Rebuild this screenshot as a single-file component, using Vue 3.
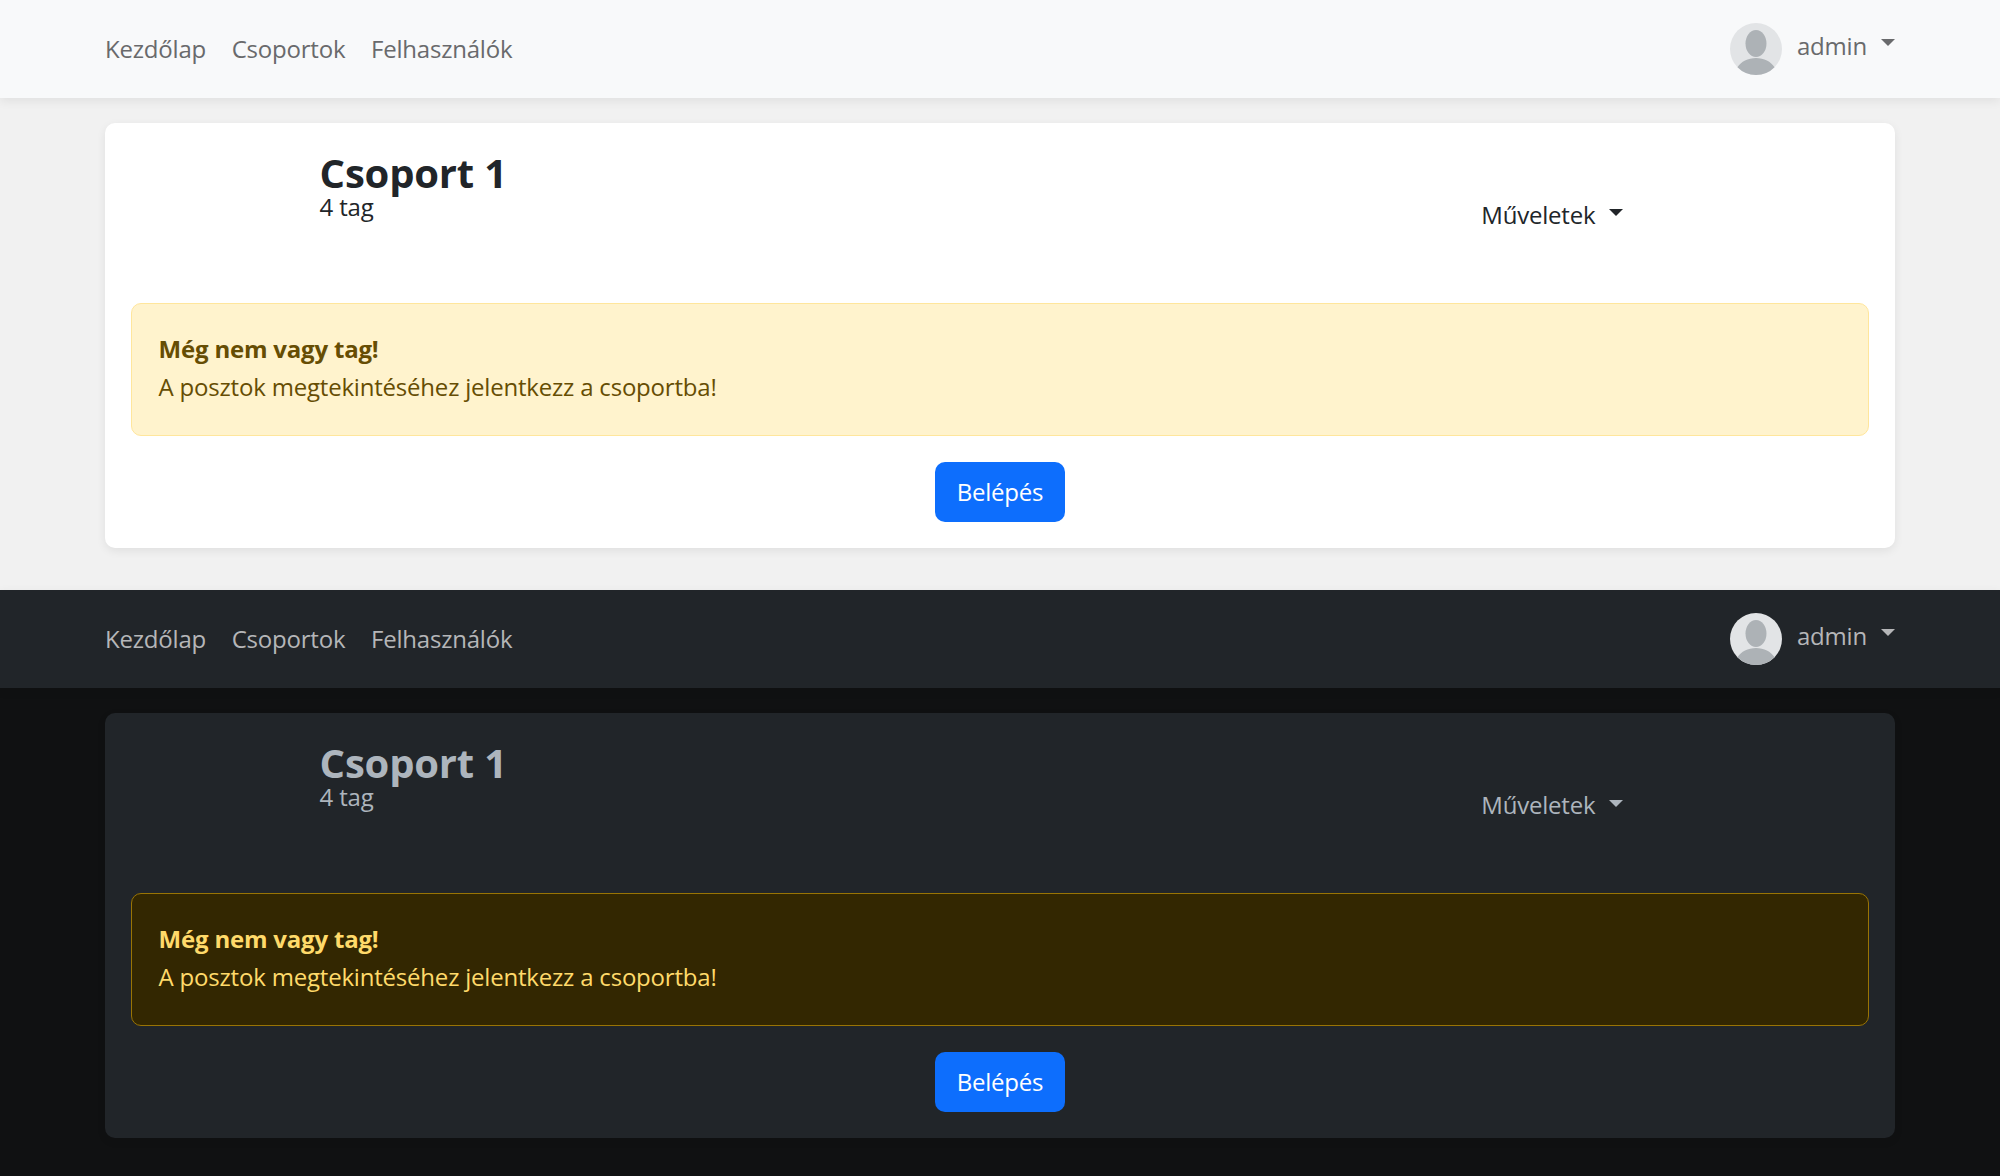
<script setup>
const themes = ['light', 'dark'];
const links = ['Kezdőlap', 'Csoportok', 'Felhasználók'];
</script>

<template>
  <div class="page">
    <section v-for="theme in themes" :key="theme" :class="['view', theme]">
      <nav class="navbar">
        <div class="nav-links">
          <a v-for="link in links" :key="link" class="nav-link">{{ link }}</a>
        </div>
        <div class="user">
          <svg class="avatar" viewBox="0 0 52 52">
            <circle cx="26" cy="26" r="26" fill="#e2e4e6" />
            <ellipse cx="26" cy="20.5" rx="10.5" ry="13.5" fill="#adb2b6" />
            <path d="M7.5 44.3C11 38.5 18 35 26 35s15 3.5 18.5 9.3A26 26 0 0 1 26 52 26 26 0 0 1 7.5 44.3z" fill="#adb2b6" />
          </svg>
          <span class="user-name">admin</span>
          <span class="caret"></span>
        </div>
      </nav>

      <main class="card">
        <header class="group-head">
          <div class="group-title">
            <h2>Csoport 1</h2>
            <p>4 tag</p>
          </div>
          <div class="actions">
            <span>Műveletek</span>
            <span class="caret"></span>
          </div>
        </header>

        <div class="alert">
          <strong>Még nem vagy tag!</strong>
          <p>A posztok megtekintéséhez jelentkezz a csoportba!</p>
        </div>

        <div class="join">
          <button class="btn">Belépés</button>
        </div>
      </main>
    </section>
  </div>
</template>

<style>
html, body {
  margin: 0;
  overflow: hidden;
}
</style>

<style scoped>
.page {
  height: 100vh;
  display: flex;
  flex-direction: column;
  font-family: "Open Sans", "Noto Sans", sans-serif;
  font-size: 24px;
  letter-spacing: -0.2px;
  line-height: 38.4px;
}

.view {
  padding-bottom: 42px;
}
.view.dark {
  flex: 1;
  padding-bottom: 0;
}

.light {
  --bg: #f1f1f1;
  --nav: #f8f9fa;
  --link: #696a6c;
  --card: #fff;
  --title: #212529;
  --text: #212529;
  --alert-bg: #fff3cd;
  --alert-border: #ffe69c;
  --alert-text: #664d03;
  --shadow: rgba(0, 0, 0, 0.075);
  background: var(--bg);
}
.dark {
  --bg: #101112;
  --nav: #212529;
  --link: #b5b6b8;
  --card: #212529;
  --title: #adb5bd;
  --text: #adb5bd;
  --alert-bg: #332701;
  --alert-border: #997404;
  --alert-text: #ffda6a;
  --shadow: rgba(0, 0, 0, 0.075);
  background: var(--bg);
}

.navbar {
  height: 97.6px;
  box-sizing: border-box;
  padding: 0 105px;
  display: flex;
  align-items: center;
  justify-content: space-between;
  background: var(--nav);
  box-shadow: 0 3px 10px var(--shadow);
  position: relative;
}
.nav-links {
  display: flex;
  margin-left: -12.8px;
}
.nav-link {
  padding: 0 12.8px;
  color: var(--link);
}

.user {
  display: flex;
  align-items: center;
  color: var(--link);
}
.avatar {
  width: 52px;
  height: 52px;
  margin-right: 15px;
}
.user-name {
  position: relative;
  top: -3px;
}
.caret {
  display: inline-block;
  margin-left: 14px;
  border-top: 7.7px solid;
  border-right: 7.7px solid transparent;
  border-left: 7.7px solid transparent;
}
.user .caret {
  position: relative;
  top: -6px;
}

.card {
  margin: 25.6px 105px 0;
  height: 425px;
  box-sizing: border-box;
  padding: 25.6px;
  background: var(--card);
  border-radius: 10px;
  box-shadow: 0 3px 10px var(--shadow);
}

.group-head {
  height: 154.4px;
  box-sizing: border-box;
  padding: 0 246px 0 189px;
  display: flex;
  justify-content: space-between;
}
.group-title h2 {
  margin: 0;
  color: var(--title);
  font-size: 40px;
  font-weight: 700;
  line-height: 48px;
}
.group-title p {
  margin: -6px 0 0;
  color: var(--text);
  line-height: 32px;
}
.actions {
  margin-top: 47px;
  height: 38.4px;
  display: flex;
  align-items: center;
  color: var(--text);
}
.actions .caret {
  position: relative;
  top: -2px;
}

.alert {
  height: 133px;
  box-sizing: border-box;
  padding: 25.6px 27px;
  background: var(--alert-bg);
  border: 1.6px solid var(--alert-border);
  border-radius: 10px;
  color: var(--alert-text);
}
.alert strong {
  display: block;
}
.alert p {
  margin: 0;
}

.join {
  margin-top: 26px;
  display: flex;
  justify-content: center;
}
.btn {
  height: 60px;
  width: 130px;
  padding: 0;
  border: none;
  border-radius: 10px;
  background: #0d6efd;
  color: #fff;
  font: inherit;
  letter-spacing: inherit;
}
</style>
